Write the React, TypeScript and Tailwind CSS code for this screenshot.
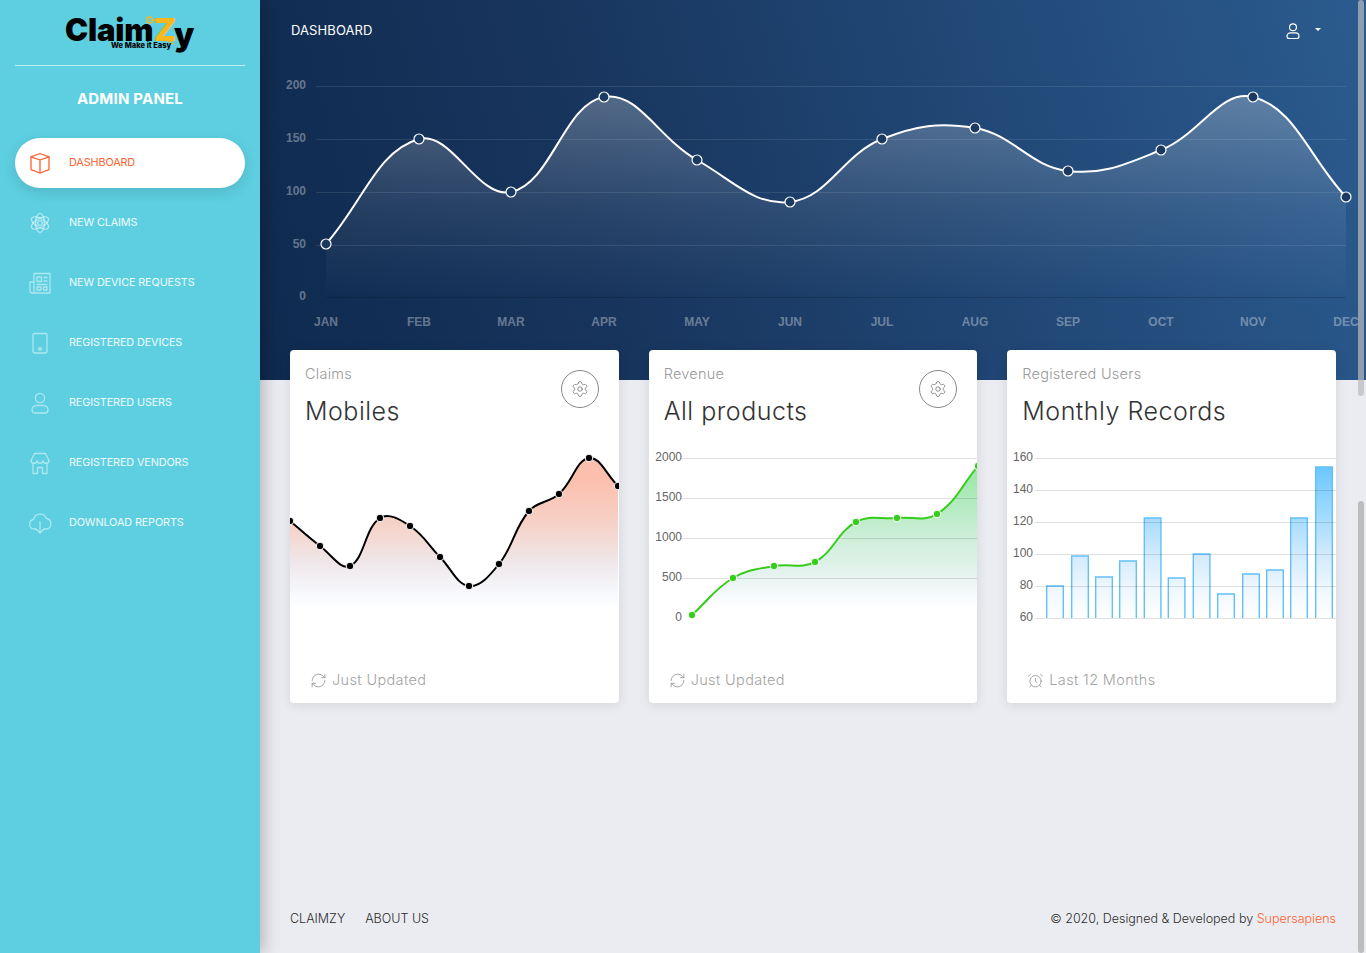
import React from 'react';
import { Settings, RefreshCw, AlarmClock } from 'lucide-react';

type Pt = [number, number];

// same curve as chart.js with tension 0.4
const splinePath = (pts: Pt[], t = 0.4) => {
  const ctrl = pts.map((p, i) => {
    const a = pts[i - 1] || p;
    const b = pts[i + 1] || p;
    const d01 = Math.hypot(p[0] - a[0], p[1] - a[1]);
    const d12 = Math.hypot(b[0] - p[0], b[1] - p[1]);
    const sum = d01 + d12 || 1;
    const fa = (t * d01) / sum;
    const fb = (t * d12) / sum;
    return {
      prev: [p[0] - fa * (b[0] - a[0]), p[1] - fa * (b[1] - a[1])],
      next: [p[0] + fb * (b[0] - a[0]), p[1] + fb * (b[1] - a[1])],
    };
  });
  let d = `M${pts[0][0]} ${pts[0][1]}`;
  for (let i = 1; i < pts.length; i++) {
    const c1 = ctrl[i - 1].next;
    const c2 = ctrl[i].prev;
    d += ` C${c1[0]} ${c1[1]} ${c2[0]} ${c2[1]} ${pts[i][0]} ${pts[i][1]}`;
  }
  return d;
};

const Ico = ({ size = 24, sw = 1.3, children }: { size?: number; sw?: number; children: React.ReactNode }) => (
  <svg width={size} height={size} viewBox="0 0 24 24" fill="none" stroke="currentColor" strokeWidth={sw} strokeLinejoin="round" strokeLinecap="round" className="shrink-0">
    {children}
  </svg>
);

const BoxIcon = () => (
  <Ico>
    <path d="M12 2.5 21 5.8 V18.6 L12 22 3 18.6 V5.8 Z" />
    <path d="M3 5.8 12 9 21 5.8 M12 9 V22" />
  </Ico>
);
const AtomIcon = () => (
  <Ico>
    <circle cx="12" cy="12" r="2.4" />
    <ellipse cx="12" cy="12" rx="4.4" ry="9.6" />
    <ellipse cx="12" cy="12" rx="4.4" ry="9.6" transform="rotate(60 12 12)" />
    <ellipse cx="12" cy="12" rx="4.4" ry="9.6" transform="rotate(120 12 12)" />
  </Ico>
);
const NewsIcon = () => (
  <Ico>
    <path d="M6 22 V2.5 H22 V22 H4.5 A2.5 2.5 0 0 1 2 19.5 V11 H6" />
    <path d="M9 6 H13.5 V10.5 H9 Z M16 6.5 H19 M16 10 H19 M9 13.5 H19 M9 16 V19 H13 V16 Z M15.5 16 H19 V19 H15.5 Z" />
  </Ico>
);
const PhoneIcon = () => (
  <Ico>
    <rect x="5" y="2.5" width="14" height="19.5" rx="1.5" />
    <circle cx="12" cy="18" r="1.4" />
  </Ico>
);
const UserIcon = ({ size = 24, sw = 1.3 }: { size?: number; sw?: number }) => (
  <Ico size={size} sw={sw}>
    <circle cx="12" cy="7" r="4.6" />
    <path d="M8.5 14.5 H15.5 A4.5 4.5 0 0 1 20 19 A3 3 0 0 1 17 22 H7 A3 3 0 0 1 4 19 A4.5 4.5 0 0 1 8.5 14.5 Z" />
  </Ico>
);
const StoreIcon = () => (
  <Ico>
    <path d="M6.5 2.5 H17.5 L21 9.5 A3 2.8 0 0 1 15 9.5 A3 2.8 0 0 1 9 9.5 A3 2.8 0 0 1 3 9.5 Z" />
    <path d="M5 13 V22.5 H9.5 V16.5 H14.5 V22.5 H19 V13" />
  </Ico>
);
const CloudIcon = () => (
  <Ico>
    <path d="M8 18 H6.5 A4.8 4.8 0 0 1 5.5 8.5 A6.8 6.8 0 0 1 18.5 7.5 A5.3 5.3 0 0 1 18 18 H16" />
    <path d="M12 11 V22 M8.5 18.5 12 22 15.5 18.5" />
  </Ico>
);

const navItems = [
  { label: 'DASHBOARD', icon: BoxIcon, active: true },
  { label: 'NEW CLAIMS', icon: AtomIcon },
  { label: 'NEW DEVICE REQUESTS', icon: NewsIcon },
  { label: 'REGISTERED DEVICES', icon: PhoneIcon },
  { label: 'REGISTERED USERS', icon: UserIcon },
  { label: 'REGISTERED VENDORS', icon: StoreIcon },
  { label: 'DOWNLOAD REPORTS', icon: CloudIcon },
];

const months = ['JAN', 'FEB', 'MAR', 'APR', 'MAY', 'JUN', 'JUL', 'AUG', 'SEP', 'OCT', 'NOV', 'DEC'];
const bigXs = [66, 159, 251, 344, 437, 530, 622, 715, 808, 901, 993, 1086];
const bigYs = [244, 139, 192, 97, 160, 202, 139, 128, 171, 150, 97, 197];
const bigPts: Pt[] = bigXs.map((x, i) => [x, bigYs[i]]);

const BigChart = () => {
  const line = splinePath(bigPts);
  return (
    <svg className="absolute left-0 top-0" width="1106" height="380" style={{ fontFamily: '"Liberation Sans", sans-serif' }}>
      <defs>
        <linearGradient id="bigFill" gradientUnits="userSpaceOnUse" x1="0" y1="97" x2="0" y2="298">
          <stop offset="0" stopColor="#ffffff" stopOpacity="0.25" />
          <stop offset="0.55" stopColor="#ffffff" stopOpacity="0.08" />
          <stop offset="1" stopColor="#ffffff" stopOpacity="0" />
        </linearGradient>
      </defs>
      {[86, 139, 192, 245].map((y) => (
        <line key={y} x1="56" x2="1086" y1={y + 0.5} y2={y + 0.5} stroke="#ffffff" strokeOpacity="0.1" />
      ))}
      <line x1="66" x2="1086" y1="297.5" y2="297.5" stroke="#000000" strokeOpacity="0.15" />
      {[['200', 85], ['150', 138], ['100', 191], ['50', 244], ['0', 296]].map(([t, y]) => (
        <text key={t} x="46" y={Number(y) + 4} textAnchor="end" fontSize="12" fontWeight="700" fill="#ffffff" fillOpacity="0.36">{t}</text>
      ))}
      {months.map((m, i) => (
        <text key={m} x={bigXs[i]} y="326" textAnchor="middle" fontSize="12" fontWeight="700" fill="#ffffff" fillOpacity="0.36">{m}</text>
      ))}
      <path d={`${line} L1086 298 L66 298 Z`} fill="url(#bigFill)" />
      <path d={line} fill="none" stroke="#ffffff" strokeWidth="2" />
      {bigPts.map(([x, y]) => (
        <circle key={x} cx={x} cy={y} r="5" fill="#1b3a62" stroke="#ffffff" strokeWidth="1.2" />
      ))}
    </svg>
  );
};

const mobilePts: Pt[] = [[0, 171], [30, 196], [60, 216], [90, 168], [120, 176], [150, 207], [179, 236], [209, 214], [239, 161], [269, 144], [299, 108], [328, 136]];

const MobilesChart = () => {
  const line = splinePath(mobilePts);
  return (
    <svg className="absolute left-0 top-0" width="100%" height="353">
      <defs>
        <linearGradient id="peach" gradientUnits="userSpaceOnUse" x1="0" y1="128" x2="0" y2="258">
          <stop offset="0" stopColor="#fcbfad" />
          <stop offset="0.36" stopColor="#f6d2c7" />
          <stop offset="0.65" stopColor="#efe7ea" />
          <stop offset="0.88" stopColor="#f6f8fc" />
          <stop offset="1" stopColor="#ffffff" />
        </linearGradient>
      </defs>
      <path d={`${line} L328 275 L0 275 Z`} fill="url(#peach)" />
      <path d={line} fill="none" stroke="#000000" strokeWidth="2" />
      {mobilePts.map(([x, y]) => (
        <circle key={x} cx={x} cy={y} r="3.8" fill="#000000" stroke="#ffffff" strokeWidth="1" />
      ))}
    </svg>
  );
};

const revenuePts: Pt[] = [[43, 265], [84, 228], [125, 216], [166, 212], [207, 172], [248, 168], [288, 164], [329, 116]];

const RevenueChart = () => {
  const line = splinePath(revenuePts);
  return (
    <svg className="absolute left-0 top-0" width="100%" height="353" style={{ fontFamily: '"Liberation Sans", sans-serif' }}>
      <defs>
        <linearGradient id="green" gradientUnits="userSpaceOnUse" x1="0" y1="128" x2="0" y2="258">
          <stop offset="0" stopColor="#a0e8ad" />
          <stop offset="0.46" stopColor="#cdeed8" />
          <stop offset="0.77" stopColor="#e8f4f2" />
          <stop offset="0.92" stopColor="#f8fbfd" />
          <stop offset="1" stopColor="#ffffff" />
        </linearGradient>
      </defs>
      <path d={`${line} L329 275 L43 275 Z`} fill="url(#green)" />
      {[108, 148, 188, 228].map((y) => (
        <line key={y} x1="33" x2="329" y1={y + 0.5} y2={y + 0.5} stroke="#000000" strokeOpacity="0.12" />
      ))}
      {[['2000', 107], ['1500', 147], ['1000', 187], ['500', 227], ['0', 267]].map(([t, y]) => (
        <text key={t} x="33" y={Number(y) + 4} textAnchor="end" fontSize="12" fill="#666666">{t}</text>
      ))}
      <path d={line} fill="none" stroke="#36cc1c" strokeWidth="2" />
      {revenuePts.map(([x, y]) => (
        <circle key={x} cx={x} cy={y} r="3.8" fill="#36cc1c" stroke="#ffffff" strokeWidth="1" />
      ))}
    </svg>
  );
};

const bars = [
  [39.7, 236], [64.7, 206], [88.7, 227], [112.7, 211], [137.3, 168], [161.3, 228],
  [186.3, 204], [210.7, 244], [235.7, 224], [259.7, 220], [283.7, 168], [308.7, 117],
];

const RecordsChart = () => (
  <svg className="absolute left-0 top-0" width="100%" height="353" style={{ fontFamily: '"Liberation Sans", sans-serif' }}>
    <defs>
      <linearGradient id="blue" gradientUnits="userSpaceOnUse" x1="0" y1="117" x2="0" y2="268">
        <stop offset="0" stopColor="#6ac7ff" />
        <stop offset="0.34" stopColor="#a5dcfd" />
        <stop offset="0.58" stopColor="#d2eafd" />
        <stop offset="0.8" stopColor="#eef7fe" />
        <stop offset="1" stopColor="#ffffff" />
      </linearGradient>
    </defs>
    {bars.map(([x, y]) => (
      <path key={x} d={`M${x} 268 V${y} H${x + 16.6} V268`} fill="url(#blue)" stroke="#62c0fb" strokeWidth="1.4" />
    ))}
    {[108, 140, 172, 204, 236, 268].map((y) => (
      <line key={y} x1="28" x2="329" y1={y + 0.5} y2={y + 0.5} stroke="#000000" strokeOpacity="0.12" />
    ))}
    {[['160', 107], ['140', 139], ['120', 171], ['100', 203], ['80', 235], ['60', 267]].map(([t, y]) => (
      <text key={t} x="26" y={Number(y) + 4} textAnchor="end" fontSize="12" fill="#666666">{t}</text>
    ))}
  </svg>
);

interface CardProps {
  title: string;
  heading: string;
  footer: string;
  footerIcon: React.ElementType;
  gear?: boolean;
  children: React.ReactNode;
}

const Card = ({ title, heading, footer, footerIcon: FooterIcon, gear, children }: CardProps) => (
  <div className="relative h-[353px] overflow-hidden rounded bg-white shadow-[0_2px_12px_rgba(0,0,0,0.1)]">
    {children}
    <div className="relative px-[15px] pt-[15px]">
      <p className="text-[14.5px] font-light leading-[18px] tracking-[0.25px] text-[#9a9a9a]">{title}</p>
      <h4 className="mt-[13px] text-[25px] font-light leading-[30px] tracking-[0.5px] text-[#333333]">{heading}</h4>
      {gear && (
        <button className="absolute right-[20px] top-[20px] flex h-[38px] w-[38px] items-center justify-center rounded-full border border-[#888888] text-[#777777]">
          <Settings size={18} strokeWidth={1.1} />
        </button>
      )}
    </div>
    <div className="absolute bottom-[14px] left-[20px] flex items-center gap-[5px] text-[14.5px] font-light leading-[18px] tracking-[0.35px] text-[#a3a3a3]">
      <FooterIcon size={17} strokeWidth={1.1} className="text-[#8f8f8f]" />
      <span>{footer}</span>
    </div>
  </div>
);

const Logo = () => (
  <div className="relative mt-[9px] h-[42px] w-[130px] text-black">
    <div className="absolute left-0 top-[9px] text-[31px] font-black leading-[24px] tracking-[-0.2px]">Claim</div>
    <div className="absolute left-[89px] top-[9px] text-[32px] font-black leading-[24px] text-[#f7b71d]">Z</div>
    <div className="absolute left-[109px] top-[9px] text-[32px] font-black leading-[34px]">y</div>
    <svg className="absolute left-[80px] top-[5px]" width="32" height="32" viewBox="0 0 32 32" fill="none" stroke="#f7b71d">
      <circle cx="4.5" cy="6" r="3" strokeWidth="1.3" />
      <circle cx="4.5" cy="6" r="0.8" fill="#f7b71d" stroke="none" />
      <path d="M7.5 6 H12" strokeWidth="1.5" />
      <path d="M22 27 L28 27 M25.5 24.5 L29 23 M25.5 29 L28.5 30" strokeWidth="1.6" />
    </svg>
    <div className="absolute left-[46px] top-[32px] whitespace-nowrap text-[7.5px] font-extrabold leading-[10px]">We Make it Easy</div>
  </div>
);

const App = () => {
  return (
    <div className="relative flex h-[953px] overflow-hidden bg-[#ebecf1]" style={{ fontFamily: 'Inter, "Noto Sans", sans-serif' }}>
      {/* Sidebar */}
      <aside className="relative z-10 flex w-[260px] shrink-0 flex-col bg-[#5dcfe1] px-[15px] shadow-[3px_0_16px_rgba(0,0,0,0.25)]">
        <div className="flex h-[66px] flex-col items-center border-b border-white/60">
          <Logo />
        </div>
        <h2 className="mt-[24px] text-center text-[15px] font-bold leading-[18px] tracking-[0.2px] text-white">ADMIN PANEL</h2>
        <nav className="mt-[30px] flex flex-col gap-[10px]">
          {navItems.map(({ label, icon: Icon, active }) => (
            <a
              key={label}
              className={`flex h-[50px] items-center rounded-[30px] pl-[13px] ${active ? 'bg-white text-[#f96332] shadow-[0_4px_14px_rgba(0,0,0,0.12)]' : 'text-white/90'}`}
            >
              <span className={active ? '' : 'text-white/50'}>
                <Icon />
              </span>
              <span className="ml-[17px] whitespace-nowrap text-[10.8px] font-normal leading-none tracking-[-0.1px]">{label}</span>
            </a>
          ))}
        </nav>
      </aside>

      {/* Main */}
      <main className="relative flex min-w-0 flex-1 flex-col">
        <div className="relative h-[380px] shrink-0 bg-[linear-gradient(75deg,#0f2a4f_0%,#17345c_30%,#2b5b8f_100%)]">
          <BigChart />
          <div className="relative flex h-[60px] items-center justify-between pl-[31px] pr-[45px] pt-[1px] text-white">
            <span className="text-[13px] font-normal tracking-[0.1px]">DASHBOARD</span>
            <div className="flex items-center gap-[13px]">
              <UserIcon size={18} sw={1.6} />
              <span className="mb-[2px] h-0 w-0 border-x-[3px] border-t-[3px] border-x-transparent border-t-white" />
            </div>
          </div>
        </div>

        <div className="relative z-10 -mt-[30px] grid grid-cols-3 gap-[30px] px-[30px]">
          <Card title="Claims" heading="Mobiles" footer="Just Updated" footerIcon={RefreshCw} gear>
            <MobilesChart />
          </Card>
          <Card title="Revenue" heading="All products" footer="Just Updated" footerIcon={RefreshCw} gear>
            <RevenueChart />
          </Card>
          <Card title="Registered Users" heading="Monthly Records" footer="Last 12 Months" footerIcon={AlarmClock}>
            <RecordsChart />
          </Card>
        </div>

        <footer className="mt-auto flex h-[70px] items-start justify-between px-[30px] pt-[27px] text-[12.5px] font-light leading-[18px] text-[#2c2c2c]">
          <div className="flex gap-[20px]">
            <a>CLAIMZY</a>
            <a>ABOUT US</a>
          </div>
          <p>
            © 2020, Designed &amp; Developed by <span className="text-[#f96332]">Supersapiens</span>
          </p>
        </footer>

        {/* scrollbar thumbs */}
        <div className="absolute right-[2px] top-0 z-20 h-[396px] w-[6px] rounded-[3px] bg-[#bbbbbb]/70" />
        <div className="absolute bottom-0 right-[2px] z-20 h-[452px] w-[6px] rounded-[3px] bg-[#bdbdbd]" />
      </main>
    </div>
  );
};

export default App;
